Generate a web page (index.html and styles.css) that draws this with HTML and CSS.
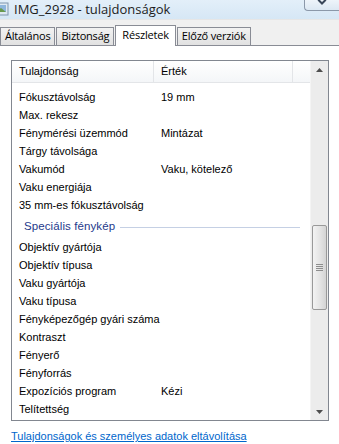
FILE: index.html
```html
<!DOCTYPE html>
<html lang="hu">
<head>
    <meta charset="UTF-8">
    <title>IMG_2928 - tulajdonságok</title>
    <link rel="stylesheet" href="styles.css">
</head>
<body>
    <div class="titlebar">
        <svg class="app-icon" width="9" height="14" viewBox="0 0 9 14">
            <rect x="-6" y="1" width="14" height="12" fill="#dfe9f2" stroke="#7f95ad"/>
            <rect x="-4" y="3" width="10" height="7" fill="#8fb6dc"/>
            <path d="M-4 10 L1 6 L6 10 Z" fill="#6a9a4c"/>
        </svg>
        <span class="title">IMG_2928 - tulajdonságok</span>
        <div class="close-btn">
            <svg width="14" height="6" viewBox="0 0 14 6">
                <path d="M3 0 L7 4 L11 0 M4 0 L7 3 L10 0" stroke="#39475a" stroke-width="1.3" fill="none"/>
            </svg>
        </div>
    </div>

    <div class="tabstrip">
        <div class="tab">Általános</div>
        <div class="tab">Biztonság</div>
        <div class="tab active">Részletek</div>
        <div class="tab">Előző verziók</div>
    </div>

    <div class="panel">
        <div class="listview">
            <div class="list">
                <div class="header">
                    <div class="col col-name">Tulajdonság</div>
                    <div class="col col-value">Érték</div>
                    <div class="col col-rest"></div>
                </div>
                <div class="rows">
                    <div class="row"><span class="name">Fókusztávolság</span><span class="value">19 mm</span></div>
                    <div class="row"><span class="name">Max. rekesz</span><span class="value"></span></div>
                    <div class="row"><span class="name">Fénymérési üzemmód</span><span class="value">Mintázat</span></div>
                    <div class="row"><span class="name">Tárgy távolsága</span><span class="value"></span></div>
                    <div class="row"><span class="name">Vakumód</span><span class="value">Vaku, kötelező</span></div>
                    <div class="row"><span class="name">Vaku energiája</span><span class="value"></span></div>
                    <div class="row"><span class="name">35 mm-es fókusztávolság</span><span class="value"></span></div>
                    <div class="group"><span class="group-title">Speciális fénykép</span><span class="group-line"></span></div>
                    <div class="row"><span class="name">Objektív gyártója</span><span class="value"></span></div>
                    <div class="row"><span class="name">Objektív típusa</span><span class="value"></span></div>
                    <div class="row"><span class="name">Vaku gyártója</span><span class="value"></span></div>
                    <div class="row"><span class="name">Vaku típusa</span><span class="value"></span></div>
                    <div class="row"><span class="name">Fényképezőgép gyári száma</span><span class="value"></span></div>
                    <div class="row"><span class="name">Kontraszt</span><span class="value"></span></div>
                    <div class="row"><span class="name">Fényerő</span><span class="value"></span></div>
                    <div class="row"><span class="name">Fényforrás</span><span class="value"></span></div>
                    <div class="row"><span class="name">Expozíciós program</span><span class="value">Kézi</span></div>
                    <div class="row"><span class="name">Telítettség</span><span class="value"></span></div>
                </div>
            </div>
            <div class="scrollbar">
                <div class="arrow">
                    <svg width="7" height="4" viewBox="0 0 7 4"><path d="M0 4 L3.5 0 L7 4 Z" fill="#4d4d4d"/></svg>
                </div>
                <div class="track track-top"></div>
                <div class="thumb">
                    <svg width="7" height="7" viewBox="0 0 7 7">
                        <path d="M0 0.5 H7 M0 2.5 H7 M0 4.5 H7 M0 6.5 H7" stroke="#8d8d8d" stroke-width="1"/>
                    </svg>
                </div>
                <div class="track track-bottom"></div>
                <div class="arrow">
                    <svg width="7" height="4" viewBox="0 0 7 4"><path d="M0 0 L3.5 4 L7 0 Z" fill="#4d4d4d"/></svg>
                </div>
            </div>
        </div>

        <a class="remove-link" href="#">Tulajdonságok és személyes adatok eltávolítása</a>
    </div>
</body>
</html>
```

FILE: styles.css
```css
body {
    margin: 0;
    width: 339px;
    height: 444px;
    overflow: hidden;
    font-family: "Liberation Sans", Arial, sans-serif;
    font-size: 11px;
    color: #000;
    background-color: #fff;
}

/* Window title */
.titlebar {
    height: 19px;
    display: flex;
    align-items: flex-start;
    background: linear-gradient(#e3eff9, #d6e7f5);
    position: relative;
}

.app-icon {
    margin-top: 2px;
}

.title {
    margin-left: 5px;
    margin-top: 1px;
    font-family: "Open Sans", "Liberation Sans", sans-serif;
    font-size: 13px;
    color: #1c1c1c;
    line-height: 16px;
}

.close-btn {
    position: absolute;
    right: 0;
    top: 0;
    width: 34px;
    height: 10px;
    border: 1px solid #8b98a9;
    border-top: none;
    border-right: none;
    border-bottom-left-radius: 4px;
    background: linear-gradient(#eef4fa, #dce8f3);
    display: flex;
    justify-content: center;
    align-items: flex-start;
}

/* Tabs */
.tabstrip {
    height: 27px;
    background-color: #f0f0f0;
    border-top: 1px solid #e6e6e6;
    border-bottom: 1px solid #898c95;
    display: flex;
    align-items: flex-end;
    box-sizing: border-box;
}

.tab {
    height: 17px;
    line-height: 16px;
    padding: 0 4px;
    margin-right: 1px;
    border: 1px solid #898c95;
    border-bottom: none;
    background: linear-gradient(#f2f2f2, #e1e1e1);
    font-family: "Open Sans", "Liberation Sans", sans-serif;
    font-size: 11px;
    letter-spacing: -0.2px;
}

.tab.active {
    height: 20px;
    margin-bottom: -1px;
    line-height: 17px;
    padding: 0 6px;
    background: #fff;
}

/* Content panel */
.panel {
    padding: 14px 10px 0 11px;
}

.listview {
    display: flex;
    height: 359px;
    border: 1px solid #828790;
}

.list {
    flex: 1;
    display: flex;
    flex-direction: column;
    overflow: hidden;
}

.header {
    display: flex;
    height: 21px;
    border-bottom: 1px solid #e3e5e8;
    background: linear-gradient(#ffffff, #f4f6f8);
    flex-shrink: 0;
}

.col {
    line-height: 21px;
    border-right: 1px solid #e3e5e8;
    box-sizing: border-box;
}

.col-name {
    width: 142px;
    padding-left: 7px;
}

.col-value {
    width: 139px;
    padding-left: 7px;
}

.col-rest {
    flex: 1;
    border-right: none;
}

.rows {
    padding-top: 5px;
}

.row {
    display: flex;
    height: 18px;
    line-height: 18px;
}

.name {
    width: 142px;
    padding-left: 7px;
    box-sizing: border-box;
    white-space: nowrap;
}

.value {
    padding-left: 7px;
}

.group {
    display: flex;
    align-items: center;
    height: 24px;
    padding-left: 12px;
}

.group-title {
    font-size: 11.5px;
    color: #1e3a8c;
    letter-spacing: 0.1px;
}

.group-line {
    flex: 1;
    height: 1px;
    margin: 2px 10px 0 5px;
    background-color: #c5d0e4;
}

/* Scrollbar */
.scrollbar {
    width: 17px;
    display: flex;
    flex-direction: column;
    background-color: #ececec;
    border-left: 1px solid #f4f4f4;
}

.arrow {
    height: 17px;
    display: flex;
    justify-content: center;
    align-items: center;
}

.track-top {
    height: 147px;
}

.thumb {
    height: 83px;
    margin: 0 1px;
    border: 1px solid #999;
    border-radius: 2px;
    background: linear-gradient(to right, #f3f3f3, #e2e2e2 60%, #d4d4d4);
    display: flex;
    justify-content: center;
    align-items: center;
}

.track-bottom {
    flex: 1;
}

.remove-link {
    display: block;
    margin-top: 9px;
    color: #0066cc;
    font-size: 11px;
}
```
